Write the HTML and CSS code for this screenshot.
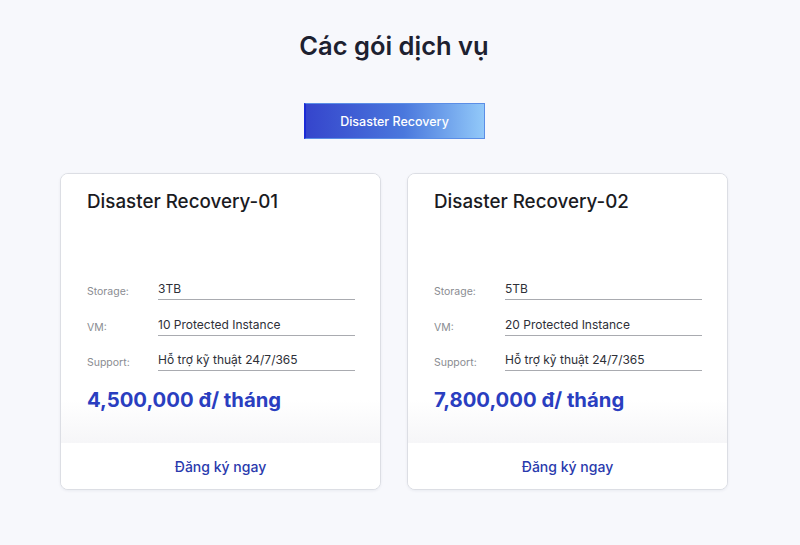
FILE: index.html
```html
<!DOCTYPE html>
<html lang="vi">
<head>
<meta charset="utf-8">
<title>Các gói dịch vụ</title>
<link rel="stylesheet" href="styles.css">
</head>
<body>
<main class="page">
  <h1 class="title">Các gói dịch vụ</h1>
  <div class="tabs">
    <button class="tab active">Disaster Recovery</button>
  </div>
  <div class="cards">
    <section class="card">
      <div class="card-body">
        <h2 class="card-title">Disaster Recovery-01</h2>
        <div class="specs">
          <div class="row"><span class="label">Storage:</span><span class="value">3TB</span></div>
          <div class="row"><span class="label">VM:</span><span class="value">10 Protected Instance</span></div>
          <div class="row"><span class="label">Support:</span><span class="value">Hỗ trợ kỹ thuật 24/7/365</span></div>
        </div>
        <div class="price">4,500,000 đ/ tháng</div>
      </div>
      <div class="card-foot"><a class="cta" href="#">Đăng ký ngay</a></div>
    </section>
    <section class="card">
      <div class="card-body">
        <h2 class="card-title">Disaster Recovery-02</h2>
        <div class="specs">
          <div class="row"><span class="label">Storage:</span><span class="value">5TB</span></div>
          <div class="row"><span class="label">VM:</span><span class="value">20 Protected Instance</span></div>
          <div class="row"><span class="label">Support:</span><span class="value">Hỗ trợ kỹ thuật 24/7/365</span></div>
        </div>
        <div class="price">7,800,000 đ/ tháng</div>
      </div>
      <div class="card-foot"><a class="cta" href="#">Đăng ký ngay</a></div>
    </section>
  </div>
</main>
</body>
</html>
```
FILE: styles.css
```css
* { box-sizing: border-box; }
html, body { margin: 0; padding: 0; }
body {
  background: #f7f8fc;
  font-family: Inter, "Noto Sans", "Liberation Sans", sans-serif;
  color: #1e2230;
  height: 545px;
  overflow: hidden;
}
.page {
  width: 788px;
  padding-top: 31px;
  display: flex;
  flex-direction: column;
  align-items: center;
}
.title {
  margin: 0;
  font-size: 25.5px;
  line-height: 30px;
  font-weight: 600;
  color: #1d2130;
}
.tabs {
  margin-top: 42px;
  display: flex;
}
.tab {
  width: 181px;
  height: 36px;
  border: 1px solid #5b8ee6;
  border-left: 2px solid #1b2bd6;
  background: linear-gradient(90deg, #3545cc 0%, #4a78dd 55%, #92c9f9 100%);
  color: #fff;
  font-family: inherit;
  font-size: 12.5px;
  font-weight: 500;
  padding: 0;
}
.cards {
  margin-top: 34px;
  display: flex;
  gap: 26px;
}
.card {
  width: 321px;
  height: 317px;
  background: #fff;
  border: 1px solid #dcdee4;
  border-radius: 8px;
  box-shadow: 0 1px 3px rgba(20, 30, 60, 0.06);
  display: flex;
  flex-direction: column;
  overflow: hidden;
}
.card-body {
  flex: 1;
  padding: 16px 25px 0 26px;
  background: linear-gradient(180deg, #fff 0%, #fff 84%, #f6f6f8 100%);
}
.card-title {
  margin: 0;
  font-size: 18.8px;
  line-height: 24px;
  font-weight: 500;
  color: #1b1b1f;
}
.specs {
  margin-top: 67px;
  display: flex;
  flex-direction: column;
  gap: 16.5px;
}
.row {
  display: flex;
  align-items: flex-start;
}
.label {
  width: 71px;
  font-size: 10.5px;
  color: #8a8c92;
  padding-top: 4px;
}
.value {
  flex: 1;
  font-size: 12px;
  line-height: 15px;
  color: #2e3038;
  padding-bottom: 3px;
  border-bottom: 1px solid #a9abb0;
}
.price {
  margin-top: 16px;
  font-size: 20.3px;
  line-height: 26px;
  font-weight: 700;
  color: #2a3ec0;
}
.card-foot {
  height: 46px;
  display: flex;
  align-items: center;
  justify-content: center;
  background: #fff;
}
.cta {
  font-size: 14px;
  font-weight: 500;
  color: #2a3aad;
  text-decoration: none;
}
```
